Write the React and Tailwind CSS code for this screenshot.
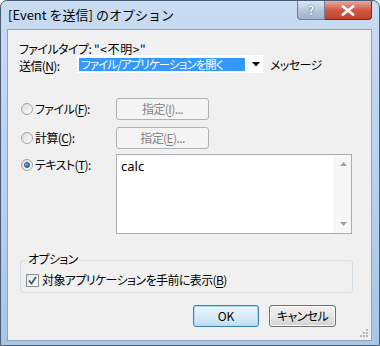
const FONT = "font-['Noto_Sans_CJK_JP','Noto_Sans',sans-serif] [font-feature-settings:'palt']"

function Radio({ checked }) {
  return (
    <span className="w-[12px] h-[12px] rounded-full border border-[#a5a5a5] bg-gradient-to-br from-[#dcdcdc] to-[#fbfbfb] flex items-center justify-center shrink-0">
      {checked && (
        <span className="w-[6px] h-[6px] rounded-full bg-gradient-to-br from-[#8ad0f5] to-[#1b59a8] border border-[#2a4f8a]" />
      )}
    </span>
  )
}

function Checkbox() {
  return (
    <span className="w-[13px] h-[13px] border border-[#8f8f8f] bg-gradient-to-br from-[#e2e2e2] to-[#ffffff] flex items-center justify-center shrink-0">
      <svg width="9" height="9" viewBox="0 0 9 9">
        <path d="M1 4.5 L3.5 7.5 L8 1" fill="none" stroke="#3c5a94" strokeWidth="1.8" />
      </svg>
    </span>
  )
}

function Key({ k }) {
  return <span className="underline underline-offset-[2px]">{k}</span>
}

function DisabledButton({ children }) {
  return (
    <div className="w-[93px] h-[22px] rounded-[3px] border border-[#adb2b5] bg-[#f4f4f4] text-[#838383] flex items-center justify-center whitespace-nowrap">
      {children}
    </div>
  )
}

export default function App() {
  return (
    <div className={`w-[380px] h-[346px] relative overflow-hidden rounded-t-[7px] border border-[#4b5d74] bg-gradient-to-b from-[#c9dcf1] via-[#b9d1ec] to-[#a9c6e7] text-[12px] text-black ${FONT}`}>
      {/* title bar */}
      <div className="h-[28px] flex items-start justify-between">
        <div className="pl-[7px] pt-[5px] text-[13px] leading-[18px] [font-feature-settings:normal]">[Event を送信] のオプション</div>
        <div className="flex mr-[7px]">
          <div className="w-[28px] h-[19px] rounded-bl-[4px] border border-[#6d7f96] border-t-0 bg-gradient-to-b from-[#dbe6f3] via-[#b8c8dc] to-[#9fb3cc] flex items-center justify-center text-white font-bold text-[12px] [text-shadow:0_0_2px_#35475e]">
            ?
          </div>
          <div className="w-[47px] h-[19px] rounded-br-[4px] border border-[#6b2a22] border-t-0 border-l-0 bg-gradient-to-b from-[#e8a89c] via-[#cf5a45] to-[#c3422c] flex items-center justify-center">
            <svg width="14" height="11" viewBox="0 0 14 11">
              <path d="M2 1.5 L12 9.5 M12 1.5 L2 9.5" stroke="#fff" strokeWidth="2.6" strokeLinecap="square" />
            </svg>
          </div>
        </div>
      </div>

      {/* client area */}
      <div className="ml-[6px] w-[365px] h-[312px] border border-[#8ea4bc] bg-[#f0f0f0] relative flex flex-col tracking-[-0.6px]">
        <div className="mt-[12px] ml-[11px] h-[14px] leading-[14px] flex whitespace-nowrap">
          <span className="w-[75px] shrink-0">ファイルタイプ:</span>
          <span className="tracking-[0.6px]">"&lt;不明&gt;"</span>
        </div>

        <div className="mt-[-1px] ml-[11px] h-[18px] flex items-center whitespace-nowrap">
          <span className="w-[58px] shrink-0 pt-[3px]">送信(<Key k="N" />):</span>
          <div className="w-[186px] h-[18px] bg-white flex items-center pl-[2px] shrink-0">
            <span className="w-[166px] h-[13px] bg-[#3399ff] text-white text-[11.5px] tracking-[-0.9px] leading-[13px] pl-[2px]">
              ファイル/アプリケーションを開く
            </span>
            <svg className="ml-[7px]" width="8" height="5" viewBox="0 0 8 5">
              <path d="M0 0 H8 L4 4.5 Z" fill="#000" />
            </svg>
          </div>
          <span className="ml-[7px] pt-[2px]">メッセージ</span>
        </div>

        <div className="mt-[25px] ml-[13px] flex items-center h-[22px]">
          <div className="w-[95px] flex items-center gap-[2px] whitespace-nowrap">
            <Radio />
            <span>ファイル(<Key k="F" />):</span>
          </div>
          <DisabledButton>指定(<Key k="I" />)...</DisabledButton>
        </div>

        <div className="mt-[7px] ml-[13px] flex items-center h-[21px]">
          <div className="w-[95px] flex items-center gap-[2px] whitespace-nowrap">
            <Radio />
            <span>計算(<Key k="C" />):</span>
          </div>
          <DisabledButton>指定(<Key k="E" />)...</DisabledButton>
        </div>

        <div className="mt-[6px] ml-[13px] flex items-start h-[80px]">
          <div className="w-[95px] h-[22px] flex items-center gap-[2px] whitespace-nowrap">
            <Radio checked />
            <span>テキスト(<Key k="T" />):</span>
          </div>
          <div className="w-[236px] h-[80px] border border-[#abadb3] bg-white flex">
            <div className="flex-1 pl-[4px] pt-[2px] text-[13px] tracking-normal font-['Noto_Sans','Liberation_Sans',sans-serif]">calc</div>
            <div className="w-[17px] bg-[#f7f7f7] border-l border-[#f0f0f0] flex flex-col items-center justify-between py-[7px]">
              <svg width="7" height="4" viewBox="0 0 7 4"><path d="M0 4 L3.5 0 L7 4 Z" fill="#a0a0a0" /></svg>
              <svg width="7" height="4" viewBox="0 0 7 4"><path d="M0 0 L7 0 L3.5 4 Z" fill="#a0a0a0" /></svg>
            </div>
          </div>
        </div>

        <div className="mt-[26px] ml-[12px] w-[333px] h-[33px] border border-[#d5dfe5] rounded-[3px] relative">
          <span className="absolute left-[6px] top-[-10px] bg-[#f0f0f0] px-[1px] leading-[16px]">オプション</span>
          <div className="mt-[11px] ml-[5px] flex items-center gap-[3px] whitespace-nowrap">
            <Checkbox />
            <span className="leading-[16px]">対象アプリケーションを手前に表示(<Key k="B" />)</span>
          </div>
        </div>

        <div className="mt-[12px] mr-[35px] flex justify-end gap-[10px] tracking-normal">
          <div className="w-[66px] h-[22px] rounded-[3px] border border-[#3c7fb1] bg-gradient-to-b from-[#eef6fc] via-[#d8ecf8] to-[#bfdff3] shadow-[inset_0_0_0_1px_#a8dcf7] flex items-center justify-center">
            OK
          </div>
          <div className="w-[67px] h-[22px] rounded-[3px] border border-[#707070] bg-gradient-to-b from-[#f2f2f2] via-[#e6e6e6] to-[#d0d0d0] shadow-[inset_0_0_0_1px_#fcfcfc] flex items-center justify-center tracking-[-0.6px]">
            キャンセル
          </div>
        </div>

        <svg className="absolute right-[2px] bottom-[2px]" width="10" height="10" viewBox="0 0 10 10">
          <g fill="#b5b5b5">
            <rect x="7" y="1" width="2" height="2" />
            <rect x="4" y="4" width="2" height="2" />
            <rect x="7" y="4" width="2" height="2" />
            <rect x="1" y="7" width="2" height="2" />
            <rect x="4" y="7" width="2" height="2" />
            <rect x="7" y="7" width="2" height="2" />
          </g>
        </svg>
      </div>
    </div>
  )
}
